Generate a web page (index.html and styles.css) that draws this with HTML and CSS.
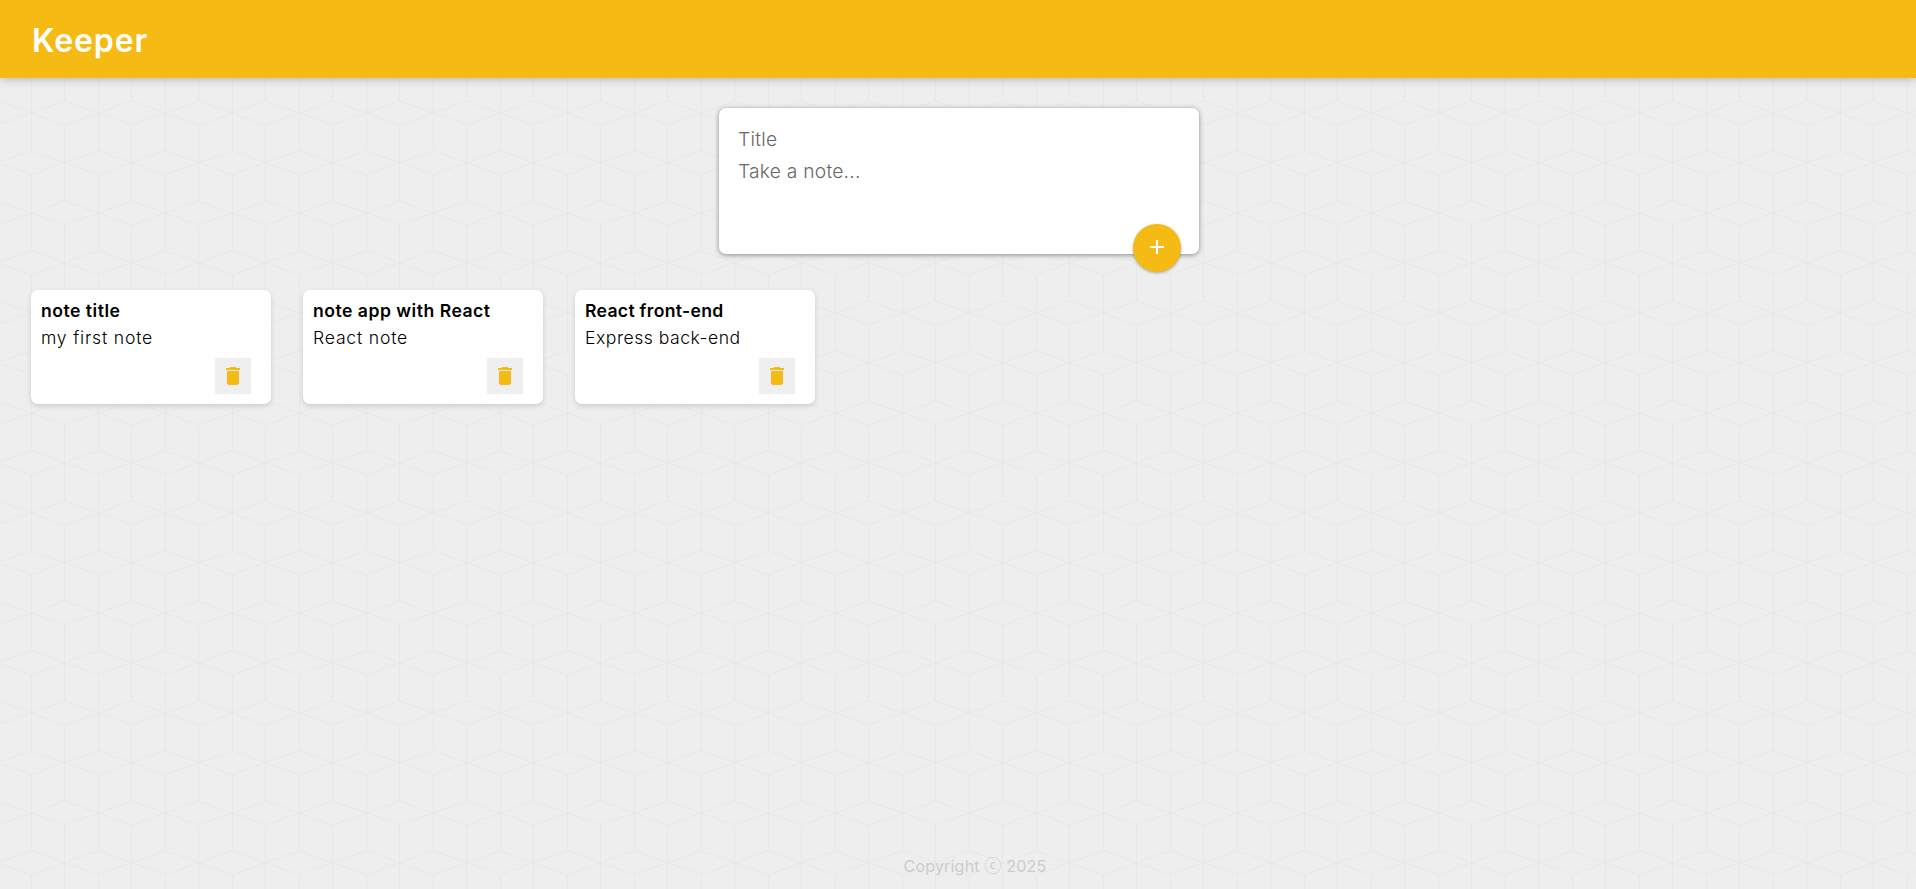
FILE: index.html
```html
<!DOCTYPE html>
<html lang="en">
<head>
<meta charset="utf-8">
<title>Keeper</title>
<link rel="stylesheet" href="styles.css">
</head>
<body>
<header class="header"><h1 class="logo">Keeper</h1></header>
<main class="main">
  <form class="create-note">
    <input class="field field-title" placeholder="Title" aria-label="Title">
    <textarea class="field field-content" placeholder="Take a note..." aria-label="Note"></textarea>
    <button class="add" type="button" aria-label="Add"><svg viewBox="0 0 24 24" width="24" height="24"><path d="M19 13h-6v6h-2v-6H5v-2h6V5h2v6h6v2z"/></svg></button>
  </form>
  <section class="notes">
    <article class="note">
      <h2 class="note-title">note title</h2>
      <p class="note-text">my first note</p>
      <button class="delete" type="button" aria-label="Delete"><svg viewBox="0 0 24 24" width="24" height="24"><path d="M6 19c0 1.1.9 2 2 2h8c1.1 0 2-.9 2-2V7H6v12zM19 4h-3.500l-1-1h-5l-1 1H5v2h14V4z"/></svg></button>
    </article>
    <article class="note">
      <h2 class="note-title">note app with React</h2>
      <p class="note-text">React note</p>
      <button class="delete" type="button" aria-label="Delete"><svg viewBox="0 0 24 24" width="24" height="24"><path d="M6 19c0 1.1.9 2 2 2h8c1.1 0 2-.9 2-2V7H6v12zM19 4h-3.500l-1-1h-5l-1 1H5v2h14V4z"/></svg></button>
    </article>
    <article class="note">
      <h2 class="note-title tight">React front-end</h2>
      <p class="note-text tight">Express back-end</p>
      <button class="delete" type="button" aria-label="Delete"><svg viewBox="0 0 24 24" width="24" height="24"><path d="M6 19c0 1.1.9 2 2 2h8c1.1 0 2-.9 2-2V7H6v12zM19 4h-3.500l-1-1h-5l-1 1H5v2h14V4z"/></svg></button>
    </article>
  </section>
</main>
<footer class="footer"><p class="copyright">Copyright <span class="mark">ⓒ</span> 2025</p></footer>
</body>
</html>
```
FILE: styles.css
```css
* {
  margin: 0;
  padding: 0;
  box-sizing: border-box;
}

html {
  font-family: Inter, "Noto Sans", sans-serif;
}

body {
  height: 889px;
  overflow: hidden;
  display: flex;
  flex-direction: column;
  background-color: #eee;
  background-image: url("data:image/svg+xml,%3Csvg xmlns='http://www.w3.org/2000/svg' width='67' height='100'%3E%3Cg fill='none' stroke='%23e7e7e7'%3E%3Cpath d='M-35.500 13L-2.500 1L31.500 13L-2.500 25ZM31.500 13L64.500 1L98.500 13L64.500 25ZM-2.500 62.700L31.500 50.700L64.500 62.700L31.500 74.700ZM64.500 62.700L98.500 50.700L131 62.700L98.500 74.700ZM31.500 0V50.700M31.500 74.700V100M64.500 25V100M64.500 0V1'/%3E%3C/g%3E%3C/svg%3E");
}

.header {
  height: 78px;
  padding: 18px 32px 14px;
  display: flex;
  align-items: center;
  background: #f5ba13;
  box-shadow: 0 0 10px rgba(0, 0, 0, 0.3);
}

.logo {
  color: #fff;
  font-size: 32px;
  font-weight: 600;
  line-height: 46px;
  letter-spacing: 0.9px;
}

.main {
  flex: 1;
  padding: 30px 31px 0;
}

.create-note {
  position: relative;
  width: 480px;
  height: 146px;
  margin: 0 auto;
  padding: 15px 19px;
  display: flex;
  flex-direction: column;
  background: #fff;
  border-radius: 7px;
  box-shadow: 0 1px 5px rgb(138, 137, 137);
  left: 1px;
}

.field {
  width: 100%;
  border: 0;
  outline: 0;
  resize: none;
  background: transparent;
  font-family: inherit;
  font-size: 19.2px;
  font-weight: 300;
  line-height: 32px;
  letter-spacing: 0.25px;
}

.field::placeholder {
  color: #686868;
}

.field-title {
  height: 32px;
}

.field-content {
  height: 84px;
}

.add {
  position: absolute;
  right: 18px;
  bottom: -18px;
  width: 48px;
  height: 48px;
  display: grid;
  place-items: center;
  padding-bottom: 2px;
  border: 0;
  border-radius: 50%;
  background: #f5ba13;
  box-shadow: 0 1px 3px rgba(0, 0, 0, 0.3);
}

.add svg {
  fill: #fff;
}

.notes {
  margin-top: 36px;
  display: flex;
  gap: 32px;
}

.note {
  width: 240px;
  height: 114px;
  padding: 10px;
  display: flex;
  flex-direction: column;
  background: #fff;
  border-radius: 7px;
  box-shadow: 0 2px 5px #ccc;
}

.note-title {
  height: 25px;
  font-size: 17.6px;
  font-weight: 600;
  line-height: 22px;
  letter-spacing: 0.5px;
  white-space: nowrap;
}

.note-text {
  height: 33px;
  font-size: 17.6px;
  font-weight: 300;
  line-height: 25px;
  letter-spacing: 0.8px;
  white-space: nowrap;
}

.note .tight {
  letter-spacing: 0.3px;
}

.note .note-text.tight {
  letter-spacing: 0.5px;
}

.delete {
  width: 36px;
  height: 36px;
  margin-right: 10px;
  flex: none;
  align-self: flex-end;
  display: grid;
  place-items: center;
  border: 0;
  background: #efefef;
}

.delete svg {
  fill: #f5ba13;
}

.footer {
  height: 39px;
  display: flex;
  justify-content: center;
  padding-left: 34px;
}

.copyright {
  color: #ccc;
  font-size: 16px;
  line-height: 32px;
  letter-spacing: 0.2px;
}

.mark {
  font-family: "Noto Sans CJK SC", sans-serif;
  font-size: 17px;
  line-height: 1;
}
```
